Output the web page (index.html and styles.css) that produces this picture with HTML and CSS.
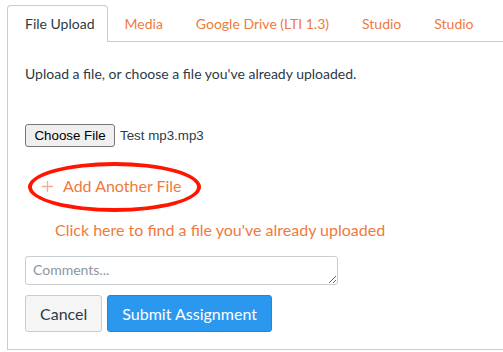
FILE: index.html
```html
<!DOCTYPE html>
<html lang="en">
<head>
  <meta charset="UTF-8" />
  <title>Submit Assignment</title>
  <link rel="stylesheet" href="styles.css">
</head>
<body>
  <div class="submission">
    <!-- Tabs -->
    <ul class="tabs">
      <li class="tabs__item active">File Upload</li>
      <li class="tabs__item">Media</li>
      <li class="tabs__item">Google Drive (LTI 1.3)</li>
      <li class="tabs__item">Studio</li>
      <li class="tabs__item">Studio</li>
    </ul>

    <!-- Panel -->
    <div class="panel">
      <p class="intro">Upload a file, or choose a file you've already uploaded.</p>

      <div class="file-row">
        <button class="file-btn">Choose File</button>
        <span class="file-name">Test mp3.mp3</span>
      </div>

      <div class="add-file">
        <svg class="plus" width="11" height="11" viewBox="0 0 11 11">
          <path d="M5.5 0v11M0 5.5h11" stroke="currentColor" stroke-width="1.3" fill="none" />
        </svg>
        Add Another File
        <span class="circle"></span>
      </div>

      <a class="find-link" href="#">Click here to find a file you've already uploaded</a>

      <textarea class="comments" placeholder="Comments..."></textarea>

      <div class="actions">
        <button class="btn">Cancel</button>
        <button class="btn btn--primary">Submit Assignment</button>
      </div>
    </div>
  </div>
</body>
</html>
```

FILE: styles.css
```css
:root {
  --text-color: #2d3b45;
  --border-color: #c7cdd1;
  --link-color: #ee7a3e;
  --primary-bg: #2b98f0;
  --mark-color: #ff1500;
}

body {
  font-family: 'Lato', sans-serif;
  margin: 0;
  padding: 0;
  background-color: #fff;
  color: var(--text-color);
  overflow: hidden;
}

.submission {
  margin: 5px 0 0 7px;
}

.tabs {
  display: flex;
  list-style: none;
  margin: 0;
  padding: 0;
  border-bottom: 1px solid var(--border-color);
}

.tabs__item {
  height: 35px;
  line-height: 35px;
  padding: 0 15px 0 16px;
  font-size: 14px;
  color: var(--link-color);
  border: 1px solid transparent;
  border-bottom: none;
  margin-bottom: -1px;
  white-space: nowrap;
}

.tabs__item.active {
  padding: 0 12px 0 17px;
  color: var(--text-color);
  background: #fff;
  border-color: var(--border-color);
  border-radius: 4px 4px 0 0;
  height: 36px;
}

.panel {
  border-left: 1px solid var(--border-color);
  border-bottom: 1px solid var(--border-color);
  padding: 0 0 17px 17px;
}

.intro {
  margin: 0;
  padding-top: 23px;
  font-size: 14px;
  line-height: 18px;
}

.file-row {
  display: flex;
  align-items: center;
  gap: 5px;
  margin-top: 41px;
  font-family: 'Liberation Sans', sans-serif;
  font-size: 13.33px;
}

.file-btn {
  font-family: 'Liberation Sans', sans-serif;
  font-size: 13.33px;
  color: #000;
  background: #efefef;
  border: 1px solid #767676;
  border-radius: 3px;
  height: 23px;
  width: 90px;
  padding: 0;
}

.add-file {
  position: relative;
  display: flex;
  align-items: center;
  width: 160px;
  margin: 29px 0 0 17px;
  font-size: 16px;
  line-height: 20px;
  color: var(--link-color);
}

.plus {
  margin-right: 10px;
  opacity: 0.6;
}

/* red annotation ring drawn over the link */
.circle {
  position: absolute;
  left: -14px;
  top: -14px;
  width: 165px;
  height: 42px;
  border: 4.5px solid var(--mark-color);
  border-radius: 50%;
}

.find-link {
  display: block;
  margin: 24px 0 0 30px;
  font-size: 16px;
  line-height: 20px;
  color: var(--link-color);
  text-decoration: none;
}

.comments {
  display: block;
  box-sizing: border-box;
  width: 313px;
  height: 29px;
  margin-top: 16px;
  padding: 4px 7px;
  font-family: 'Lato', sans-serif;
  font-size: 14px;
  border: 1px solid var(--border-color);
  border-radius: 3px;
  resize: vertical;
}

.comments::placeholder {
  color: #8b969e;
}

.actions {
  display: flex;
  gap: 5px;
  margin-top: 10px;
}

.btn {
  height: 37px;
  padding: 0 14px;
  font-family: 'Lato', sans-serif;
  font-size: 16px;
  color: var(--text-color);
  background: #f5f5f5;
  border: 1px solid var(--border-color);
  border-radius: 3px;
}

.btn--primary {
  color: #fff;
  background: var(--primary-bg);
  border-color: #1f88dd;
}
```
